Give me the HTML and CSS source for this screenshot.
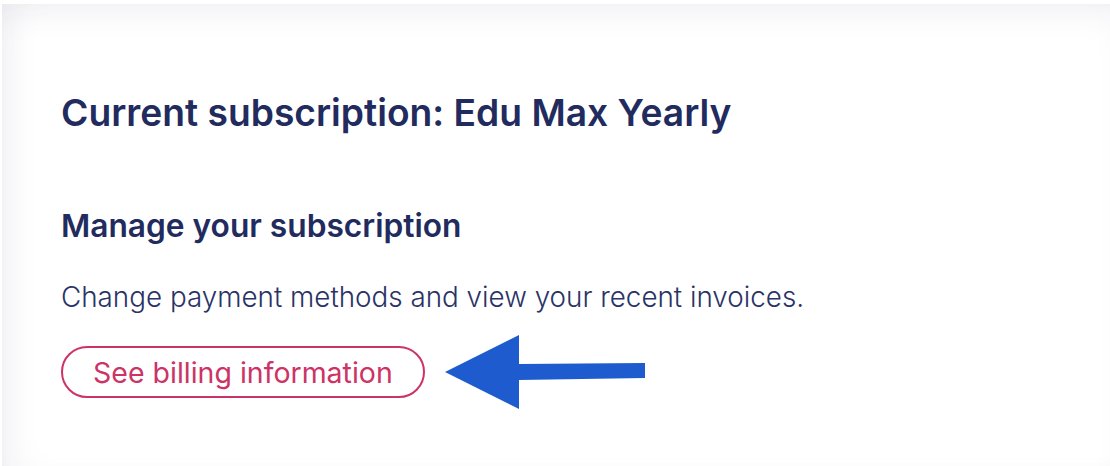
FILE: index.html
```html
<!DOCTYPE html>
<html lang="en">
<head>
    <meta charset="UTF-8">
    <meta name="viewport" content="width=device-width, initial-scale=1.0">
    <title>Subscription</title>
    <link rel="stylesheet" href="styles.css">
</head>
<body>
    <div class="panel">
        <h1 class="plan-title">Current subscription: Edu Max Yearly</h1>
        <h2 class="section-title">Manage your subscription</h2>
        <p class="section-text">Change payment methods and view your recent invoices.</p>
        <div class="action-row">
            <button type="button" class="billing-btn">See billing information</button>
            <svg class="pointer-arrow" width="200" height="74" viewBox="0 0 200 74">
                <polygon points="0,37 74,0 74,29 200,28 200,43 74,45 74,74" fill="#1d5bcf"/>
            </svg>
        </div>
    </div>
</body>
</html>
```

FILE: styles.css
```css
body {
    margin: 0;
    background-color: #ffffff;
    font-family: Inter, "Liberation Sans", sans-serif;
}
.panel {
    margin: 4px 0 0 2px;
    height: 462px;
    box-sizing: border-box;
    padding: 86px 0 0 59px;
    background-color: #ffffff;
    box-shadow: inset 0 24px 40px -24px rgba(30, 36, 90, 0.09),
                inset 24px 0 40px -24px rgba(30, 36, 90, 0.09);
}
.plan-title {
    margin: 0;
    font-size: 37.2px;
    line-height: 46px;
    font-weight: 600;
    color: #222b5e;
}
.section-title {
    margin: 71px 0 0;
    font-size: 31.7px;
    line-height: 38px;
    font-weight: 600;
    color: #222b5e;
}
.section-text {
    margin: 35px 0 0;
    font-size: 27.8px;
    line-height: 34px;
    font-weight: 300;
    color: #2a3366;
}
.action-row {
    display: flex;
    align-items: center;
    gap: 20px;
    margin-top: 21px;
}
.billing-btn {
    height: 52px;
    padding: 0 30px;
    border: 2px solid #cc3366;
    border-radius: 26px;
    background-color: #ffffff;
    color: #cc3366;
    font-family: inherit;
    font-size: 28.5px;
    font-weight: 400;
    cursor: pointer;
}
.pointer-arrow {
    display: block;
}
```
